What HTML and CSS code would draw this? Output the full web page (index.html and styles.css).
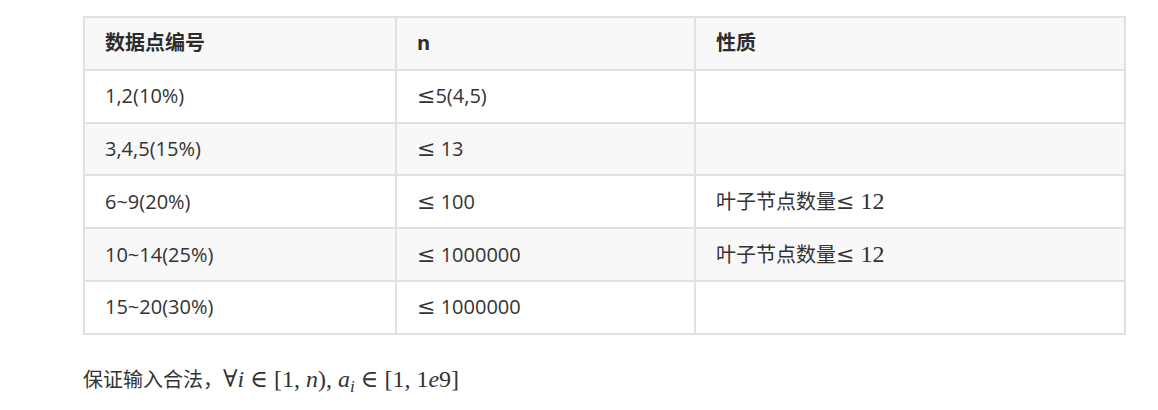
FILE: index.html
```html
<!DOCTYPE html>
<html>
<head>
<meta charset="utf-8">
<link rel="stylesheet" href="styles.css">
</head>
<body>
<div class="content">
<table class="data">
<thead>
<tr><th class="c1">数据点编号</th><th class="c2">n</th><th class="c3">性质</th></tr>
</thead>
<tbody>
<tr><td>1,2(10%)</td><td><span class="le">≤</span>5(4,5)</td><td></td></tr>
<tr class="alt"><td>3,4,5(15%)</td><td><span class="le">≤</span> 13</td><td></td></tr>
<tr><td>6~9(20%)</td><td><span class="le">≤</span> 100</td><td>叶子节点数量<span class="le">≤</span><span class="m"> 12</span></td></tr>
<tr class="alt"><td>10~14(25%)</td><td><span class="le">≤</span> 1000000</td><td>叶子节点数量<span class="le">≤</span><span class="m"> 12</span></td></tr>
<tr><td>15~20(30%)</td><td><span class="le">≤</span> 1000000</td><td></td></tr>
</tbody>
</table>
<p class="note">保证输入合法，<span class="math">∀<i>i</i> ∈ [1, <i>n</i>), <i>a</i><sub><i>i</i></sub> ∈ [1, 1<i>e</i>9]</span></p>
</div>
</body>
</html>
```

FILE: styles.css
```css
html, body {
  margin: 0;
  padding: 0;
  background: #ffffff;
}
body {
  font-family: "Open Sans", "Noto Sans CJK SC", sans-serif;
  font-size: 20px;
  color: #333333;
}
.content {
  padding: 16px 32px 0 83px;
}
.data {
  border-collapse: collapse;
  width: 1043px;
  table-layout: fixed;
}
.data th, .data td {
  border: 2px solid #dfe2e5;
  height: 52.8px;
  padding: 0 20px;
  text-align: left;
  vertical-align: middle;
  font-family: "Open Sans", "Noto Sans CJK SC", sans-serif;
  font-size: 20px;
  line-height: 28px;
  box-sizing: border-box;
}
.data thead tr {
  background: #f8f8f8;
}
.data th {
  font-weight: 700;
  color: #2c2c2c;
}
.data .c1 { width: 312px; }
.data .c2 { width: 299px; }
.data .c3 { width: auto; }
.data tr.alt {
  background: #f8f8f8;
}
.le {
  font-family: "DejaVu Serif", serif;
  font-size: 22px;
  color: #333;
}
.m {
  font-family: "Liberation Serif", "DejaVu Serif", serif;
  font-size: 24px;
  color: #333;
}
.note {
  margin: 28px 0 0 0;
  font-family: "Noto Sans CJK SC", sans-serif;
  font-size: 20px;
  line-height: 32px;
  color: #333;
}
.math {
  font-family: "Liberation Serif", "DejaVu Serif", serif;
  font-size: 24px;
}
.math i {
  font-style: italic;
}
.math sub {
  font-size: 17px;
  vertical-align: -5px;
  line-height: 0;
}
```
